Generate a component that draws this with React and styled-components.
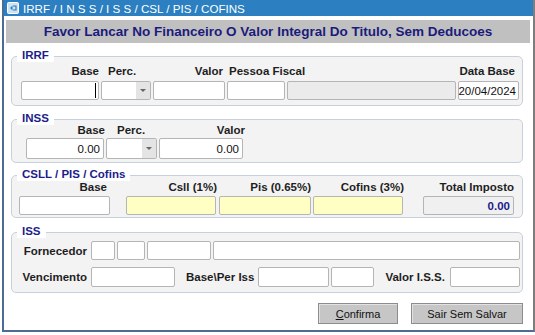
import React from 'react';
import styled, { createGlobalStyle } from 'styled-components';

const Global = createGlobalStyle`
  html, body { margin: 0; padding: 0; background: #ffffff; }
  body { font-family: "Liberation Sans", Arial, sans-serif; }
`;

const Window = styled.div`
  box-sizing: border-box;
  margin-left: 2px;
  width: 533px;
  height: 332px;
  background: #ffffff;
  border-left: 2px solid #4d6b95;
  border-right: 2px solid #7d7d7d;
  border-bottom: 2px solid #4d6b95;
  box-shadow: 0 2px 0 #8c8c8c;
  display: flex;
  flex-direction: column;
`;

const TitleBar = styled.div`
  height: 16px;
  flex: none;
  background: #2c7fc0;
  display: flex;
  align-items: center;
  gap: 4px;
  padding-left: 3px;
  color: #ffffff;
  font-size: 11.6px;
  white-space: nowrap;
`;

const Banner = styled.div`
  margin: 4px 3px 0 2px;
  height: 23px;
  flex: none;
  background: #c0c0c0;
  display: flex;
  align-items: center;
  justify-content: center;
  font-weight: bold;
  font-size: 13.5px;
  color: #1b1b7c;
  white-space: nowrap;
`;

const Group = styled.div`
  position: relative;
  flex: none;
  margin: ${(p) => p.$mt}px 10px 0 7px;
  border: 1px solid #c5d1df;
  border-radius: 5px;
  background: #f3f3f3;
  padding: ${(p) => p.$pad};
`;

const Legend = styled.span`
  position: absolute;
  top: -9px;
  left: 5px;
  background: #ffffff;
  padding: 0 5px;
  font-weight: bold;
  font-size: 11.5px;
  line-height: 14px;
  color: #1c1c8a;
  white-space: nowrap;
`;

const FieldGrid = styled.div`
  display: grid;
  grid-template-columns: ${(p) => p.$cols};
  grid-template-rows: 13px ${(p) => p.$fh}px;
  row-gap: ${(p) => p.$rg}px;
  column-gap: ${(p) => p.$cg}px;
`;

const Label = styled.div`
  grid-row: 1;
  grid-column: ${(p) => p.$col};
  font-weight: bold;
  font-size: 11.5px;
  line-height: 13px;
  color: #1e1e1e;
  white-space: nowrap;
  display: flex;
  justify-content: ${(p) => (p.$left ? 'flex-start' : 'flex-end')};
  padding-left: ${(p) => p.$pl || 0}px;
  padding-right: ${(p) => p.$pr || 0}px;
  margin-right: ${(p) => p.$mr || 0}px;
`;

const tones = {
  white: '#ffffff',
  yellow: '#ffffc4',
  disabled: '#ebebeb',
  total: '#f0f0f0',
};

const Field = styled.div`
  box-sizing: border-box;
  grid-row: 2;
  grid-column: ${(p) => p.$col || 'auto'};
  width: ${(p) => (p.$w ? `${p.$w}px` : 'auto')};
  height: ${(p) => (p.$h ? `${p.$h}px` : '100%')};
  flex: none;
  margin-left: ${(p) => p.$ml || 0}px;
  border: 1px solid #b5b5b5;
  border-radius: 2px;
  background: ${(p) => tones[p.$tone || 'white']};
  display: flex;
  align-items: center;
  justify-content: flex-end;
  padding: 0 ${(p) => (p.$pr === undefined ? 3 : p.$pr)}px 0 3px;
  font-size: 11.5px;
  color: ${(p) => (p.$strong ? '#1c1c8a' : '#111111')};
  font-weight: ${(p) => (p.$strong ? 'bold' : 'normal')};
  white-space: nowrap;
`;

const Caret = styled.span`
  width: 1px;
  height: 15px;
  background: #000000;
  margin-right: 1px;
`;

const Combo = styled(Field)`
  padding: 0;
  overflow: hidden;
`;

const ComboButton = styled.span`
  width: 14px;
  height: 100%;
  background: #e4e4e4;
  display: flex;
  align-items: center;
  justify-content: center;
  &::after {
    content: '';
    border-left: 3px solid transparent;
    border-right: 3px solid transparent;
    border-top: 3px solid #666666;
  }
`;

const IssBody = styled.div`
  display: flex;
  flex-direction: column;
  gap: 7px;
`;

const Row = styled.div`
  display: flex;
  align-items: center;
  gap: 2px;
  height: ${(p) => p.$h}px;
`;

const RowLabel = styled.div`
  flex: none;
  width: ${(p) => (p.$w ? `${p.$w}px` : 'auto')};
  margin-left: ${(p) => p.$ml || 0}px;
  padding-right: ${(p) => p.$pr || 0}px;
  box-sizing: border-box;
  text-align: right;
  font-weight: bold;
  font-size: 11.5px;
  color: #1e1e1e;
  white-space: nowrap;
`;

const ButtonBar = styled.div`
  display: flex;
  justify-content: flex-end;
  gap: 13px;
  margin: 10px 10px 0 0;
`;

const Button = styled.div`
  box-sizing: border-box;
  width: ${(p) => p.$w}px;
  height: 21px;
  background: #c6c6c6;
  border: 1px solid #8c8c8c;
  box-shadow: inset 1px 1px 0 #e2e2e2;
  display: flex;
  align-items: center;
  justify-content: center;
  font-size: 11px;
  color: #111111;
  u { text-decoration: underline; }
`;

const AppIcon = () => (
  <svg width="12" height="12" viewBox="0 0 12 12" style={{ flex: 'none' }}>
    <rect x="0.5" y="0.5" width="11" height="11" rx="1" fill="#cfe2f3" stroke="#ffffff" />
    <path d="M3 6 L5.5 3.5 L5.5 8.5 Z" fill="#2c7fc0" />
    <path d="M6 4 L9 4 L9 8 L6 8" fill="none" stroke="#2c7fc0" strokeWidth="1.2" />
  </svg>
);

export default function App() {
  return (
    <>
      <Global />
      <Window>
        <TitleBar>
          <AppIcon />
          <span>IRRF / I N S S / I S S / CSL / PIS / COFINS</span>
        </TitleBar>
        <Banner>Favor Lancar No Financeiro O Valor Integral Do Titulo, Sem Deducoes</Banner>

        <Group $mt={13} $pad="8px 0 5px 9px">
          <Legend>IRRF</Legend>
          <FieldGrid $cols="78px 50px 72px 58px 169px 61px" $fh={19} $rg={3} $cg={2}>
            <Label $col="1">Base</Label>
            <Label $col="2" $left $pl={7}>Perc.</Label>
            <Label $col="3" $pr={2}>Valor</Label>
            <Label $col="4 / span 2" $left $pl={2}>Pessoa Fiscal</Label>
            <Label $col="6" $pr={4}>Data Base</Label>
            <Field $col="1" $pr={1}><Caret /></Field>
            <Combo $col="2"><ComboButton /></Combo>
            <Field $col="3" />
            <Field $col="4" />
            <Field $col="5" $tone="disabled" />
            <Field $col="6" $pr={2}>20/04/2024</Field>
          </FieldGrid>
        </Group>

        <Group $mt={13} $pad="4px 0 3px 14px">
          <Legend>INSS</Legend>
          <FieldGrid $cols="78px 51px 84px" $fh={21} $rg={1} $cg={2}>
            <Label $col="1" $mr={-1}>Base</Label>
            <Label $col="2" $left $pl={11}>Perc.</Label>
            <Label $col="3" $mr={-2}>Valor</Label>
            <Field $col="1">0.00</Field>
            <Combo $col="2"><ComboButton /></Combo>
            <Field $col="3">0.00</Field>
          </FieldGrid>
        </Group>

        <Group $mt={12} $pad="5px 0 2px 7px">
          <Legend>CSLL / PIS / Cofins</Legend>
          <FieldGrid $cols="91px 16px 90px 3px 92px 2px 90px 20px 91px" $fh={19} $rg={2} $cg={0}>
            <Label $col="1" $pr={3}>Base</Label>
            <Label $col="3" $mr={-1}>Csll (1%)</Label>
            <Label $col="5">Pis (0.65%)</Label>
            <Label $col="7" $mr={-1}>Cofins (3%)</Label>
            <Label $col="9">Total Imposto</Label>
            <Field $col="1" />
            <Field $col="3" $tone="yellow" />
            <Field $col="5" $tone="yellow" />
            <Field $col="7" $tone="yellow" />
            <Field $col="9" $tone="total" $strong>0.00</Field>
          </FieldGrid>
        </Group>

        <Group $mt={14} $pad="8px 0 5px 0">
          <Legend>ISS</Legend>
          <IssBody>
            <Row $h={19}>
              <RowLabel $w={77} $pr={2}>Fornecedor</RowLabel>
              <Field $w={24} $h={19} />
              <Field $w={28} $h={19} />
              <Field $w={64} $h={19} />
              <Field $w={307} $h={19} />
            </Row>
            <Row $h={20}>
              <RowLabel $w={77} $pr={2}>Vencimento</RowLabel>
              <Field $w={84} $h={20} />
              <RowLabel $ml={9}>Base\Per Iss</RowLabel>
              <Field $w={71} $h={20} $ml={2} />
              <Field $w={43} $h={20} />
              <RowLabel $ml={9}>Valor I.S.S.</RowLabel>
              <Field $w={70} $h={20} $ml={3} />
            </Row>
          </IssBody>
        </Group>

        <ButtonBar>
          <Button $w={80}><span><u>C</u>onfirma</span></Button>
          <Button $w={112}>Sair Sem Salvar</Button>
        </ButtonBar>
      </Window>
    </>
  );
}
